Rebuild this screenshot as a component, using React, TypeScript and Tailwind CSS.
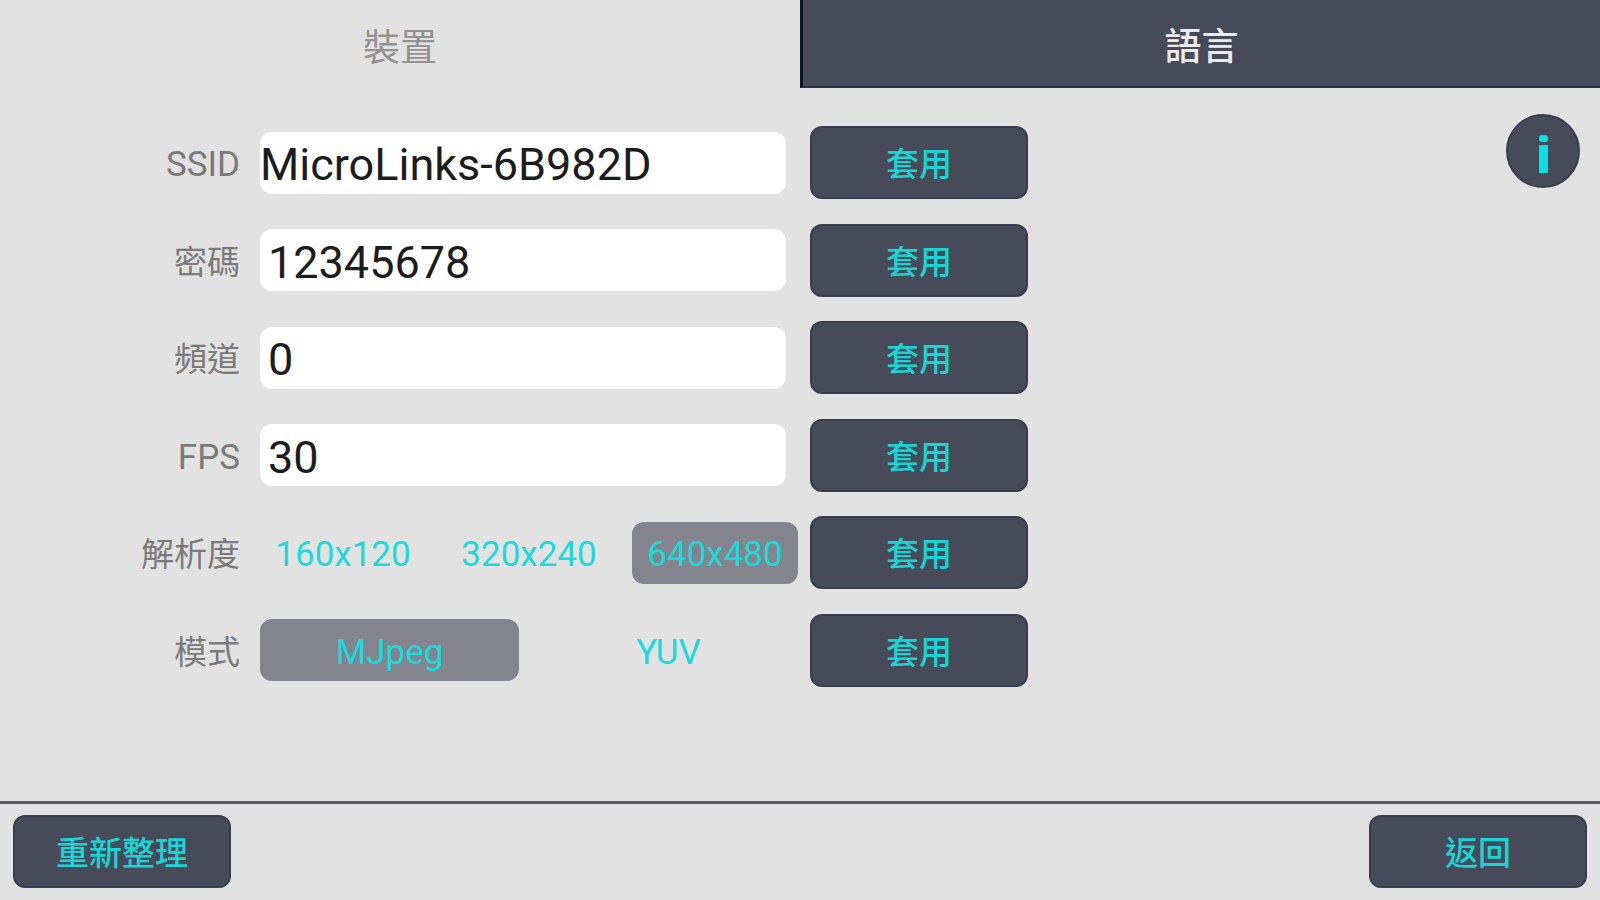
import { useState } from 'react'

const resolutions = ['160x120', '320x240', '640x480']
const modes = ['MJpeg', 'YUV']

const fields = [
  { id: 'ssid', label: 'SSID', value: 'MicroLinks-6B982D', pad: 'px-0' },
  { id: 'password', label: '密碼', value: '12345678', pad: 'px-2' },
  { id: 'channel', label: '頻道', value: '0', pad: 'px-2' },
  { id: 'fps', label: 'FPS', value: '30', pad: 'px-2' },
]

const rowClass = 'grid grid-cols-[260px_minmax(0,550px)_218px] items-center'
const labelClass = 'pt-1 pr-5 text-right leading-none text-[#7a7a7a]'

const ActionButton = ({ children }: { children: string }) => (
  <button
    type="button"
    className="h-[73px] w-[218px] rounded-xl border-2 border-[#3b3d4e] bg-[#474a59] pt-1 text-[33px] leading-none font-medium text-[#1ad3d3]"
  >
    {children}
  </button>
)

type OptionsProps = {
  name: string
  label: string
  options: string[]
  value: string
  onChange: (value: string) => void
}

const Options = ({ name, label, options, value, onChange }: OptionsProps) => (
  <div role="radiogroup" aria-label={label} className="mr-3 flex gap-5 text-[35px]">
    {options.map((option) => (
      <label
        key={option}
        className={`relative flex h-[62px] flex-1 cursor-pointer items-center justify-center rounded-xl pt-1 leading-none text-[#1bdada] ${
          option === value ? 'bg-[#84848e]' : ''
        }`}
      >
        <input
          type="radio"
          name={name}
          value={option}
          checked={option === value}
          onChange={() => onChange(option)}
          className="sr-only"
        />
        {option}
      </label>
    ))}
  </div>
)

const App = () => {
  const [resolution, setResolution] = useState('640x480')
  const [mode, setMode] = useState('MJpeg')

  return (
    <div className="flex min-h-screen flex-col bg-[#e2e2e2] font-[Roboto,'Noto_Sans_CJK_TC',sans-serif]">
      {/* Tabs */}
      <nav className="grid h-[88px] grid-cols-2 text-[37px] leading-none">
        <button type="button" className="pt-2 text-[#929292]">裝置</button>
        <button
          type="button"
          className="border-b-2 border-l-3 border-b-[#2b2d40] border-l-[#0c1230] bg-[#474a59] pt-2 font-medium text-[#ececf0]"
        >
          語言
        </button>
      </nav>

      <main className="flex flex-1 items-stretch justify-between pt-[26px] pr-5">
        <form
          className="grid flex-1 grid-rows-6 pb-[102px] text-[33px]"
          onSubmit={(e) => e.preventDefault()}
        >
          {fields.map((field) => (
            <div key={field.id} className={rowClass}>
              <label
                htmlFor={field.id}
                className={`${labelClass} ${/[A-Z]/.test(field.label) ? 'text-[35px]' : ''}`}
              >
                {field.label}
              </label>
              <input
                id={field.id}
                type="text"
                defaultValue={field.value}
                className={`mr-6 h-[62px] rounded-xl bg-white pt-1 text-[45px] leading-none text-[#1c1c1c] outline-none ${field.pad}`}
              />
              <ActionButton>套用</ActionButton>
            </div>
          ))}

          <div className={rowClass}>
            <span className={labelClass}>解析度</span>
            <Options
              name="resolution"
              label="解析度"
              options={resolutions}
              value={resolution}
              onChange={setResolution}
            />
            <ActionButton>套用</ActionButton>
          </div>

          <div className={rowClass}>
            <span className={labelClass}>模式</span>
            <Options name="mode" label="模式" options={modes} value={mode} onChange={setMode} />
            <ActionButton>套用</ActionButton>
          </div>
        </form>

        <button
          type="button"
          aria-label="Info"
          className="size-[74px] shrink-0 rounded-full border-2 border-[#3b3d4e] bg-[#474a59]"
        >
          <svg viewBox="0 0 70 70" className="size-full" fill="#0be0e0">
            <rect x="31" y="19" width="9" height="7" rx="3" />
            <rect x="31" y="29" width="9" height="28" rx="1" />
          </svg>
        </button>
      </main>

      {/* Bottom bar */}
      <footer className="flex justify-between border-t-3 border-[#5c5a60] px-[13px] pt-[11px] pb-3">
        <ActionButton>重新整理</ActionButton>
        <ActionButton>返回</ActionButton>
      </footer>
    </div>
  )
}

export default App
